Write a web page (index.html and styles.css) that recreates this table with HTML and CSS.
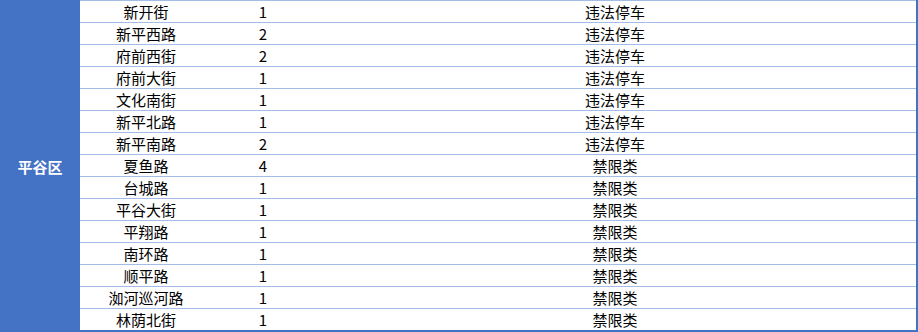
FILE: index.html
```html
<!DOCTYPE html>
<html lang="zh">
<head>
<meta charset="utf-8">
<link rel="stylesheet" href="styles.css">
</head>
<body>
<div class="sheet">
  <div class="district">平谷区</div>
  <div class="rows">
    <div class="row"><span class="c-name">新开街</span><span class="c-num">1</span><span class="c-type">违法停车</span></div>
    <div class="row"><span class="c-name">新平西路</span><span class="c-num">2</span><span class="c-type">违法停车</span></div>
    <div class="row"><span class="c-name">府前西街</span><span class="c-num">2</span><span class="c-type">违法停车</span></div>
    <div class="row"><span class="c-name">府前大街</span><span class="c-num">1</span><span class="c-type">违法停车</span></div>
    <div class="row"><span class="c-name">文化南街</span><span class="c-num">1</span><span class="c-type">违法停车</span></div>
    <div class="row"><span class="c-name">新平北路</span><span class="c-num">1</span><span class="c-type">违法停车</span></div>
    <div class="row"><span class="c-name">新平南路</span><span class="c-num">2</span><span class="c-type">违法停车</span></div>
    <div class="row"><span class="c-name">夏鱼路</span><span class="c-num">4</span><span class="c-type">禁限类</span></div>
    <div class="row"><span class="c-name">台城路</span><span class="c-num">1</span><span class="c-type">禁限类</span></div>
    <div class="row"><span class="c-name">平谷大街</span><span class="c-num">1</span><span class="c-type">禁限类</span></div>
    <div class="row"><span class="c-name">平翔路</span><span class="c-num">1</span><span class="c-type">禁限类</span></div>
    <div class="row"><span class="c-name">南环路</span><span class="c-num">1</span><span class="c-type">禁限类</span></div>
    <div class="row"><span class="c-name">顺平路</span><span class="c-num">1</span><span class="c-type">禁限类</span></div>
    <div class="row"><span class="c-name">洳河巡河路</span><span class="c-num">1</span><span class="c-type">禁限类</span></div>
    <div class="row"><span class="c-name">林荫北街</span><span class="c-num">1</span><span class="c-type">禁限类</span></div>
  </div>
</div>
</body>
</html>
```

FILE: styles.css
```css
html, body {
  margin: 0;
  padding: 0;
  background: #ffffff;
}
body {
  font-family: "Noto Sans CJK SC", "Microsoft YaHei", sans-serif;
  font-size: 15px;
  color: #000000;
}
.sheet {
  display: flex;
  width: 918px;
  height: 332px;
}
.district {
  width: 80px;
  flex: 0 0 80px;
  background: #4472c4;
  color: #ffffff;
  font-weight: bold;
  display: flex;
  align-items: center;
  justify-content: center;
}
.rows {
  width: 836px;
  border-right: 2px solid #4472c4;
  border-bottom: 2px solid #4472c4;
  display: flex;
  flex-direction: column;
}
.row {
  height: 21px;
  border-top: 1px solid #a4bde6;
  display: grid;
  grid-template-columns: 132px 102px 602px;
  align-items: center;
  line-height: 21px;
}
.row span {
  text-align: center;
  white-space: nowrap;
}
```
